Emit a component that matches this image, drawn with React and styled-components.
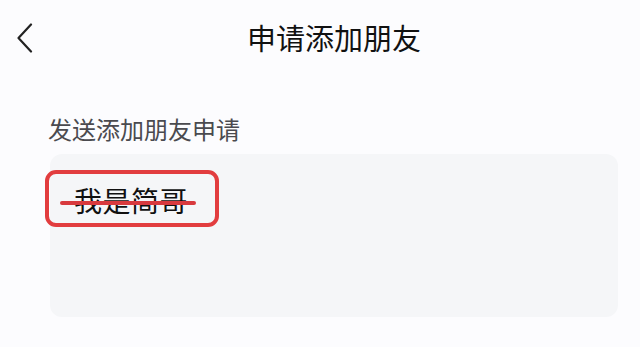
import React from 'react';
import styled, { createGlobalStyle } from 'styled-components';

const GlobalStyle = createGlobalStyle`
  html, body {
    margin: 0;
    padding: 0;
    background: #fcfcfe;
  }
  body {
    font-family: "Noto Sans CJK SC", "Noto Sans", sans-serif;
  }
`;

const Page = styled.div`
  width: 640px;
  height: 347px;
  overflow: hidden;
  background: #fcfcfe;
  display: flex;
  flex-direction: column;
`;

const Header = styled.div`
  height: 78px;
  display: flex;
  align-items: center;
  padding-left: 15px;
`;

const BackButton = styled.button`
  border: none;
  background: none;
  padding: 0;
  width: 20px;
  height: 32px;
  display: flex;
  align-items: center;
  justify-content: center;
  color: #222;
  margin-top: -2px;
`;

const Title = styled.h1`
  margin: -3px 0 0 212px;
  font-size: 29px;
  font-weight: 400;
  color: #111;
  line-height: 1;
`;

const Body = styled.div`
  padding: 36px 22px 0 48px;
  display: flex;
  flex-direction: column;
`;

const Label = styled.div`
  font-size: 24px;
  color: #4a4a4f;
  line-height: 30px;
  margin-bottom: 10px;
`;

const InputBox = styled.div`
  box-sizing: border-box;
  height: 163px;
  background: #f5f6f8;
  border-radius: 12px;
  padding-top: 16px;
  margin-left: 2px;
`;

const Highlight = styled.div`
  display: inline-flex;
  align-items: center;
  box-sizing: border-box;
  width: 174px;
  height: 57px;
  margin-left: -5px;
  border: 4px solid #e23d3f;
  border-radius: 11px;
  padding-left: 25px;
  position: relative;
`;

const Message = styled.span`
  font-size: 28px;
  color: #111;
  line-height: 1;
  letter-spacing: 0.5px;
  margin-top: 2px;
`;

const Strike = styled.span`
  position: absolute;
  left: 11px;
  top: 27px;
  width: 136px;
  height: 4px;
  border-radius: 2px;
  background: #d83a3e;
`;

export default function App() {
  return (
    <Page>
      <GlobalStyle />
      <Header>
        <BackButton aria-label="返回">
          <svg width="18" height="30" viewBox="0 0 18 30" fill="none">
            <path d="M15 1.5 L2.5 15 L15 28.5" stroke="currentColor" strokeWidth="2.2" strokeLinecap="round" strokeLinejoin="round" />
          </svg>
        </BackButton>
        <Title>申请添加朋友</Title>
      </Header>
      <Body>
        <Label>发送添加朋友申请</Label>
        <InputBox>
          <Highlight>
            <Message>我是简哥</Message>
            <Strike />
          </Highlight>
        </InputBox>
      </Body>
    </Page>
  );
}
